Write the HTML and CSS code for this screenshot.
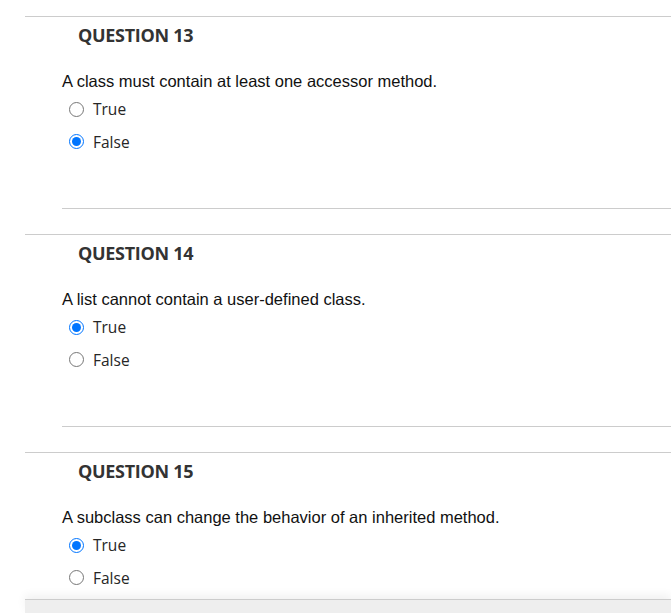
FILE: index.html
```html
<!DOCTYPE html>
<html>
<head>
<meta charset="utf-8">
<link rel="stylesheet" href="styles.css">
</head>
<body>
<div class="page">
  <section class="question">
    <h2 class="q-title">QUESTION 13</h2>
    <div class="q-body">
      <p class="q-text">A class must contain at least one accessor method.</p>
      <div class="options">
        <label class="option"><input type="radio" name="q13"> <span>True</span></label>
        <label class="option"><input type="radio" name="q13" checked> <span>False</span></label>
      </div>
    </div>
  </section>
  <section class="question">
    <h2 class="q-title">QUESTION 14</h2>
    <div class="q-body">
      <p class="q-text">A list cannot contain a user-defined class.</p>
      <div class="options">
        <label class="option"><input type="radio" name="q14" checked> <span>True</span></label>
        <label class="option"><input type="radio" name="q14"> <span>False</span></label>
      </div>
    </div>
  </section>
  <section class="question">
    <h2 class="q-title">QUESTION 15</h2>
    <div class="q-body">
      <p class="q-text">A subclass can change the behavior of an inherited method.</p>
      <div class="options">
        <label class="option"><input type="radio" name="q15" checked> <span>True</span></label>
        <label class="option"><input type="radio" name="q15"> <span>False</span></label>
      </div>
    </div>
  </section>
</div>
<div class="footer-bar"></div>
</body>
</html>
```
FILE: styles.css
```css
html, body {
  margin: 0;
  padding: 0;
  background: #fff;
  overflow: hidden;
}
.page {
  padding-top: 16px;
}
.question {
  margin-left: 25px;
  border-top: 1px solid #cccccc;
  margin-bottom: 25px;
}
.q-title {
  margin: 0;
  padding: 5px 0 0 53px;
  font-family: "Open Sans", sans-serif;
  font-weight: 700;
  font-size: 18px;
  line-height: 26px;
  color: #333333;
  letter-spacing: -0.3px;
}
.q-body {
  margin-left: 37px;
  border-bottom: 1px solid #cccccc;
  padding-top: 23px;
  height: 137px;
}
.q-text {
  margin: 0;
  font-family: "Liberation Sans", Arial, sans-serif;
  font-size: 16.5px;
  line-height: 20px;
  color: #111111;
}
.options {
  display: flex;
  flex-direction: column;
  padding-top: 2px;
  padding-left: 7px;
}
.option {
  display: flex;
  align-items: center;
  height: 32.5px;
  gap: 9px;
  font-family: "Open Sans", sans-serif;
  font-size: 15.5px;
  color: #262626;
}
.option input {
  margin: 0;
  width: 15px;
  height: 15px;
  accent-color: #0075ff;
}
.footer-bar {
  position: fixed;
  left: 25px;
  right: 0;
  bottom: 0;
  height: 13px;
  background: #eeeeee;
  border-top: 1px solid #cccccc;
  box-shadow: 0 -4px 10px rgba(0, 0, 0, 0.06);
}
```
